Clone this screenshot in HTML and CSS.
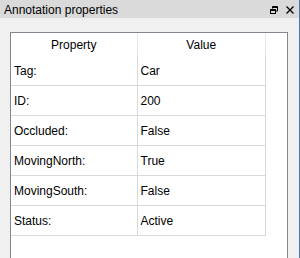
FILE: index.html
```html
<!doctype html>
<html>
<head>
  <title>Annotation properties</title>
  <link rel="stylesheet" href="styles.css">
</head>
<body>
  <div class="pane">
    <div class="titlebar">
      <span class="title">Annotation properties</span>
      <span class="buttons">
        <svg width="8" height="8" viewBox="0 0 8 8">
          <path d="M2.5 0.5h5v4.5h-2M2.5 1.5h5M2.5 0.5v2" fill="none" stroke="#000" stroke-width="1"/>
          <rect x="0.5" y="3.5" width="5" height="4" fill="none" stroke="#000"/>
          <path d="M0.5 4.5h5" stroke="#000" stroke-width="1"/>
        </svg>
        <svg width="8" height="8" viewBox="0 0 8 8">
          <path d="M0.5 0.5l7 7M7.5 0.5l-7 7" stroke="#000" stroke-width="1.3"/>
        </svg>
      </span>
    </div>
    <div class="content">
      <div class="listbox">
        <table class="props">
          <tr><th>Property</th><th>Value</th></tr>
          <tr><td>Tag:</td><td>Car</td></tr>
          <tr><td>ID:</td><td>200</td></tr>
          <tr><td>Occluded:</td><td>False</td></tr>
          <tr><td>MovingNorth:</td><td>True</td></tr>
          <tr><td>MovingSouth:</td><td>False</td></tr>
          <tr><td>Status:</td><td>Active</td></tr>
        </table>
      </div>
    </div>
  </div>
</body>
</html>
```
FILE: styles.css
```css
html, body { margin: 0; padding: 0; }
body { font-family: "Segoe UI", "Liberation Sans", Arial, sans-serif; font-size: 12px; color: #000; background: #f0f0f0; }
.pane { width: 299px; height: 258px; border-right: 1px solid #3d7ab8; display: flex; flex-direction: column; }
.titlebar { height: 18px; background: #dadada; display: flex; align-items: center; justify-content: space-between; padding: 0 5px 0 4px; }
.title { line-height: 18px; padding-top: 1px; }
.buttons { display: flex; gap: 8px; padding-top: 1px; }
.buttons svg { display: block; }
.content { flex: 1; padding: 14px 11px 0 10px; display: flex; }
.listbox { flex: 1; background: #fff; border: 1px solid #828790; border-bottom: none; }
.props { border-collapse: collapse; width: 255px; table-layout: fixed; }
.props th { font-weight: normal; height: 22px; padding: 2px 0 0; border-right: 1px solid #e8e8e8; text-align: center; box-sizing: border-box; }
.props th:first-child { width: 126px; }
.props td { height: 30px; padding: 2px 0 0 3px; border-right: 1px solid #d9d9d9; border-bottom: 1px solid #d9d9d9; box-sizing: border-box; }
```
